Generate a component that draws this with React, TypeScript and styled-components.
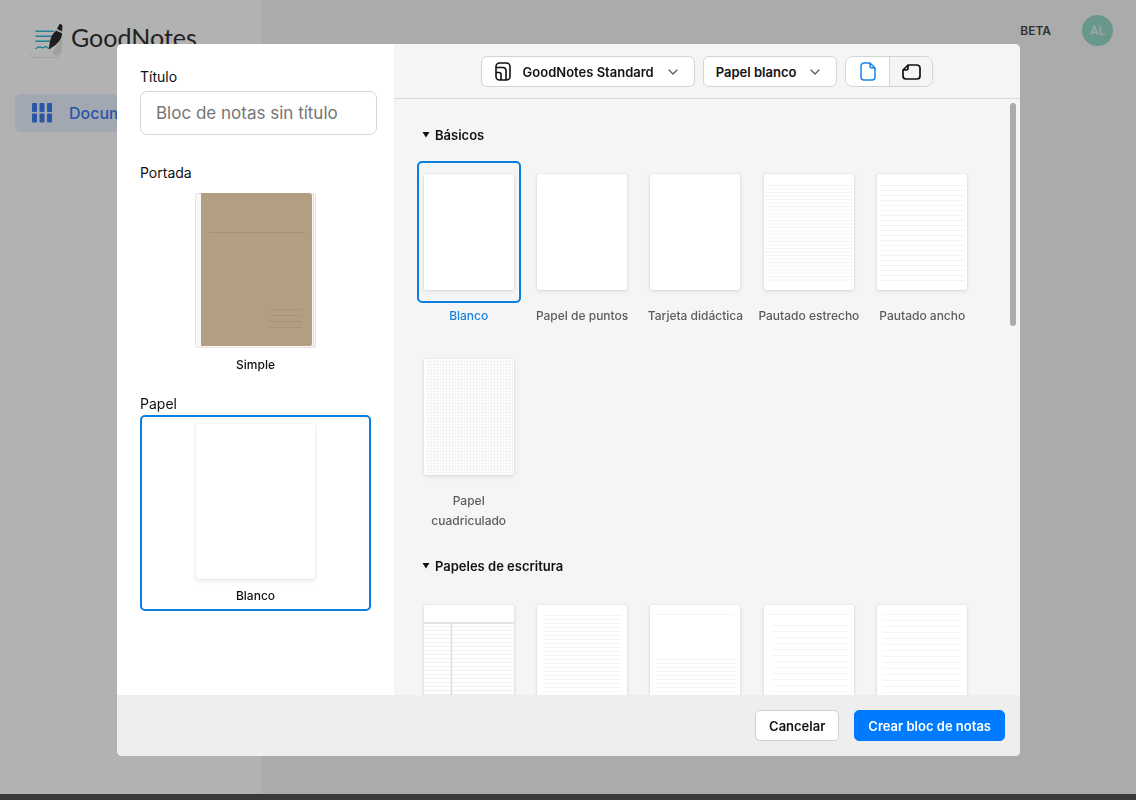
import React from "react";
import styled, { createGlobalStyle } from "styled-components";

const GlobalStyle = createGlobalStyle`
  * { box-sizing: border-box; }
  body {
    margin: 0;
    font-family: Inter, "Liberation Sans", sans-serif;
    font-size: 14px;
    color: #111;
  }
  button, input { font: inherit; color: inherit; }
`;

const Page = styled.div`
  min-height: 100vh;
  display: flex;
  background: #f5f5f5;
  border-bottom: 6px solid #393939;
`;
const Sidebar = styled.aside`
  width: 262px;
  flex: none;
  padding: 20px 15px;
  background: #fff;
`;
const Brand = styled.a`
  display: flex;
  align-items: center;
  gap: 8px;
  height: 38px;
  margin: 0 0 36px 12px;
  font-family: Lato, sans-serif;
  font-size: 25px;
  color: #303030;
  text-decoration: none;
`;
const BrandName = styled.span`
  padding-bottom: 4px;
`;
const NavLink = styled.a`
  display: flex;
  align-items: center;
  gap: 17px;
  height: 38px;
  padding: 0 17px;
  border-radius: 6px;
  background: #e8f1ff;
  color: #3b7bed;
  font-size: 16px;
  font-weight: 500;
  text-decoration: none;
`;
const Main = styled.main`
  flex: 1;
  display: flex;
  justify-content: flex-end;
  align-items: flex-start;
  gap: 31px;
  padding: 15px 23px;
`;
const Beta = styled.span`
  font-size: 12px;
  font-weight: 600;
  line-height: 31px;
  color: #484848;
`;
const Avatar = styled.button`
  width: 31px;
  height: 31px;
  padding: 0;
  border: 0;
  border-radius: 50%;
  background: #95dac8;
  color: #e0efea;
  font-size: 12px;
  font-weight: 600;
`;

const Overlay = styled.div`
  position: fixed;
  inset: 0 0 6px;
  padding: 44px 116px 38px 117px;
  background: rgba(0, 0, 0, 0.3);
`;
const Modal = styled.form`
  display: flex;
  flex-direction: column;
  height: 100%;
  border-radius: 5px;
  overflow: hidden;
  background: #fff;
`;
const Body = styled.div`
  flex: 1;
  min-height: 0;
  display: flex;
`;
const Settings = styled.section`
  width: 277px;
  flex: none;
  padding: 23px 17px 0 23px;
`;
const Label = styled.label`
  display: block;
  line-height: 20px;
`;
const Caption = styled.div`
  line-height: 20px;
`;
const TitleInput = styled.input`
  display: block;
  width: 100%;
  height: 44px;
  margin: 4px 0 28px;
  padding: 0 15px;
  border: 1px solid #d4d4d4;
  border-radius: 7px;
  font-size: 17px;
  &::placeholder { color: #757575; opacity: 1; }
`;
const Choice = styled.button<{ $selected?: boolean }>`
  display: flex;
  flex-direction: column;
  align-items: center;
  width: 231px;
  height: 196px;
  margin: 1px 0 14px;
  padding: 7px 0 0;
  gap: 7px;
  border: 2px solid ${(p) => (p.$selected ? "#0b7fe0" : "transparent")};
  border-radius: 5px;
  background: none;
  font-size: 12px;
  font-weight: 500;
  line-height: 20px;
`;
const Cover = styled.svg`
  display: block;
  width: 121px;
  height: 155px;
`;
const PaperPreview = styled.span`
  width: 119px;
  height: 155px;
  border-radius: 2px;
  background: #fff;
  box-shadow: 0 0 2px rgba(0, 0, 0, 0.16), 0 2px 5px rgba(0, 0, 0, 0.08);
`;

const Library = styled.section`
  position: relative;
  flex: 1;
  min-width: 0;
  display: flex;
  flex-direction: column;
  background: #f5f5f5;
`;
const Toolbar = styled.div`
  display: flex;
  justify-content: center;
  gap: 8px;
  padding: 12px 0 11px;
  border-bottom: 1px solid #d9d9d9;
`;
const Picker = styled.button`
  display: flex;
  align-items: center;
  gap: 11px;
  height: 31px;
  padding: 0 16px 0 12px;
  border: 1px solid #d4d4d4;
  border-radius: 6px;
  background: #fff;
  font-size: 13px;
  font-weight: 600;
  white-space: nowrap;
`;
const ChevronIcon = styled.svg`
  margin-left: 3px;
`;
const Segments = styled.div`
  display: flex;
  height: 31px;
  border: 1px solid #d4d4d4;
  border-radius: 8px;
  overflow: hidden;
`;
const Segment = styled.button<{ $active?: boolean }>`
  display: flex;
  align-items: center;
  justify-content: center;
  width: 43px;
  padding: 0;
  border: 0;
  background: ${(p) => (p.$active ? "#fff" : "#f5f5f5")};
  color: ${(p) => (p.$active ? "#1a86e8" : "#111")};
  & + & { border-left: 1px solid #d4d4d4; }
`;
const Scroller = styled.div`
  flex: 1;
  min-height: 0;
  overflow-y: auto;
  scrollbar-width: none;
  padding: 26px 41px 0 18px;
`;
const ScrollThumb = styled.span`
  position: absolute;
  top: 59px;
  right: 4px;
  width: 6px;
  height: 223px;
  border-radius: 3px;
  background: #ababab;
`;
const Group = styled.details`
  margin-bottom: 25px;
`;
const GroupTitle = styled.summary`
  display: flex;
  align-items: center;
  gap: 5px;
  margin: 0 0 16px 10px;
  font-size: 13px;
  font-weight: 600;
  line-height: 20px;
  list-style: none;
`;
const PaperGrid = styled.div`
  display: grid;
  grid-template-columns: repeat(5, 1fr);
  row-gap: 20px;
`;
const PaperOption = styled.button<{ $selected?: boolean }>`
  display: flex;
  flex-direction: column;
  justify-content: flex-start;
  align-items: center;
  gap: 3px;
  padding: 0 4px;
  border: 0;
  background: none;
  color: ${(p) => (p.$selected ? "#1a80dc" : "#5c5c5c")};
  font-size: 12px;
  font-weight: 500;
  line-height: 20px;
`;
const Frame = styled.span<{ $selected?: boolean }>`
  display: flex;
  align-items: center;
  justify-content: center;
  width: 104px;
  height: 142px;
  border: 2px solid ${(p) => (p.$selected ? "#0b7fe0" : "transparent")};
  border-radius: 5px;
`;
const Sheet = styled.svg`
  width: 90px;
  height: 116px;
  border-radius: 2px;
  background: #fff;
  box-shadow: 0 0 2px rgba(0, 0, 0, 0.14), 0 2px 5px rgba(0, 0, 0, 0.08);
`;
const Footer = styled.footer`
  display: flex;
  justify-content: flex-end;
  gap: 15px;
  padding: 15px;
  background: #eee;
`;
const Action = styled.button<{ $primary?: boolean }>`
  height: 31px;
  padding: 0 13px;
  border: 1px solid ${(p) => (p.$primary ? "#007aff" : "#d0d0d0")};
  border-radius: 5px;
  background: ${(p) => (p.$primary ? "#007aff" : "#fff")};
  color: ${(p) => (p.$primary ? "#fff" : "#111")};
  font-size: 13px;
  font-weight: 600;
`;

type Pattern = "blank" | "narrow" | "wide" | "grid" | "cornell" | "ruled" | "half" | "column" | "margin";
type Paper = { name?: string; pattern: Pattern };

const range = (from: number, to: number, step: number) => {
  const out: number[] = [];
  for (let v = from; v <= to; v += step) out.push(v);
  return out;
};
const rows = (from: number, to: number, step: number, x1: number, x2: number) =>
  range(from, to, step).map((y) => `M${x1} ${y + 0.5}H${x2}`).join("");

const patterns: Record<Pattern, React.ReactNode> = {
  blank: null,
  narrow: <path d={rows(11, 108, 3.5, 1, 89)} stroke="#f4f4f4" />,
  wide: <path d={rows(11, 108, 5, 2, 88)} stroke="#f3f3f3" />,
  grid: (
    <path
      d={rows(2, 114, 3, 1, 89) + range(4, 88, 3).map((x) => `M${x}.5 1V115`).join("")}
      stroke="#f3f3f3"
    />
  ),
  cornell: (
    <>
      <path d={rows(21, 115, 4, 0, 90)} stroke="#efefef" />
      <path d="M0 18H90M27.5 18V116" stroke="#dcdcdc" strokeWidth="1.5" />
    </>
  ),
  ruled: <path d={rows(10, 110, 4, 6, 84)} stroke="#f4f4f4" />,
  half: <path d={"M6 9.5H84" + rows(54, 112, 4, 6, 86)} stroke="#f4f4f4" />,
  column: <path d={"M4 9.5H86" + rows(20, 110, 6, 8, 84)} stroke="#f5f5f5" />,
  margin: <path d={rows(9, 110, 6, 6, 84)} stroke="#f5f5f5" />,
};

const basics: Paper[] = [
  { name: "Blanco", pattern: "blank" },
  { name: "Papel de puntos", pattern: "blank" },
  { name: "Tarjeta didáctica", pattern: "blank" },
  { name: "Pautado estrecho", pattern: "narrow" },
  { name: "Pautado ancho", pattern: "wide" },
  { name: "Papel cuadriculado", pattern: "grid" },
];
const writing: Paper[] = [
  { pattern: "cornell" },
  { pattern: "ruled" },
  { pattern: "half" },
  { pattern: "column" },
  { pattern: "margin" },
];

const Chevron = () => (
  <ChevronIcon width="10" height="6" viewBox="0 0 10 6" fill="none" stroke="#555" strokeWidth="1.2" aria-hidden="true">
    <path d="M1 1l4 4 4-4" strokeLinecap="round" strokeLinejoin="round" />
  </ChevronIcon>
);

function Papers({ title, items, selected }: { title: string; items: Paper[]; selected?: string }) {
  return (
    <Group open>
      <GroupTitle>
        <svg width="8" height="6" viewBox="0 0 8 6" aria-hidden="true"><path d="M.5 0h7L4 5.500z" fill="#111" /></svg>
        {title}
      </GroupTitle>
      <PaperGrid>
        {items.map(({ name, pattern }, i) => {
          const active = selected !== undefined && name === selected;
          return (
            <PaperOption key={i} type="button" $selected={active}>
              <Frame $selected={active}>
                <Sheet viewBox="0 0 90 116" fill="none">{patterns[pattern]}</Sheet>
              </Frame>
              {name}
            </PaperOption>
          );
        })}
      </PaperGrid>
    </Group>
  );
}

const BrandIcon = () => (
  <svg width="36" height="38" viewBox="0 0 36 38" fill="none" aria-hidden="true">
    <rect x="1" y="4" width="34" height="34" rx="8" fill="#eaeaea" />
    <rect x="1" y="1" width="34" height="36" rx="8" fill="#fff" />
    <path d="M25 33l10-15v10q0 6-6 8z" fill="#e6e6e6" />
    <path d="M8.500 11.300h18.500M8.500 16.300h16.500M8.500 21.300h15" stroke="#35b6d6" strokeWidth="1.600" />
    <path d="M9 28.500c2-1 3-2.500 5-1s3.500-2 5.500-.5 2 1.500 3.500 1" stroke="#35b6d6" strokeWidth="1.400" strokeLinecap="round" />
    <path d="M21.800 29.500L22.800 22C24 17 26 13 29 10.500l6 2.700c.2 4.500-3 9-7.200 12.300z" fill="#2c2c2c" />
    <path d="M30 9l2.500-5q2.500-.3 3 2l-.5 5.500z" fill="#2c2c2c" />
  </svg>
);

export default function App() {
  return (
    <>
      <GlobalStyle />
      <Page>
        <Sidebar>
          <Brand href="#"><BrandIcon /><BrandName>GoodNotes</BrandName></Brand>
          <nav>
            <NavLink href="#">
              <svg width="20" height="20" viewBox="0 0 20 20" fill="currentColor" aria-hidden="true">
                {[0, 7.5, 15].map((x) => [0, 10.5].map((y) => (
                  <rect key={`${x}-${y}`} x={x} y={y} width="5" height="9" rx="1" />
                )))}
              </svg>
              Documentos
            </NavLink>
          </nav>
        </Sidebar>
        <Main>
          <Beta>BETA</Beta>
          <Avatar type="button">AL</Avatar>
        </Main>
      </Page>
      <Overlay>
        <Modal role="dialog" onSubmit={(e) => e.preventDefault()}>
          <Body>
            <Settings>
              <Label htmlFor="title">Título</Label>
              <TitleInput id="title" placeholder="Bloc de notas sin título" />
              <Caption>Portada</Caption>
              <Choice type="button">
                <Cover viewBox="0 0 121 155" aria-hidden="true">
                  <rect x="0.500" y="0.500" width="120" height="154" rx="2" fill="#faf8f7" stroke="#e6e4e2" />
                  <path d="M118.500 1V154" stroke="#dedede" />
                  <path d="M6 0H114a3 3 0 0 1 3 3V151a2 2 0 0 1-2 2H6z" fill="#b29f82" />
                  <path d="M14 39.500H110" stroke="#a39277" />
                  <path d="M74 116.500H107M74 122.500H107M74 128.500H107M74 134.500H107" stroke="#a5937a" />
                </Cover>
                Simple
              </Choice>
              <Caption>Papel</Caption>
              <Choice type="button" $selected><PaperPreview />Blanco</Choice>
            </Settings>
            <Library>
              <Toolbar>
                <Picker type="button">
                  <svg width="18" height="19" viewBox="0 0 18 19" fill="none" stroke="#111" strokeWidth="1.600" aria-hidden="true">
                    <rect x="2" y="1" width="14" height="17" rx="3.500" />
                    <path d="M2 5.500h7a3 3 0 0 1 3 3V18M2 10.500h3a2 2 0 0 1 2 2V18" />
                  </svg>
                  GoodNotes Standard
                  <Chevron />
                </Picker>
                <Picker type="button">Papel blanco<Chevron /></Picker>
                <Segments>
                  <Segment type="button" $active aria-label="Vertical">
                    <svg width="16" height="19" viewBox="0 0 16 19" fill="none" stroke="currentColor" strokeWidth="1.500" strokeLinejoin="round">
                      <path d="M10 1H4a3 3 0 0 0-3 3v11a3 3 0 0 0 3 3h8a3 3 0 0 0 3-3V6zM10 1v3a2 2 0 0 0 2 2h3" />
                    </svg>
                  </Segment>
                  <Segment type="button" aria-label="Horizontal">
                    <svg width="19" height="16" viewBox="0 0 19 16" fill="none" stroke="currentColor" strokeWidth="1.700" strokeLinejoin="round">
                      <path d="M1 6v6a3 3 0 0 0 3 3h11a3 3 0 0 0 3-3V4a3 3 0 0 0-3-3H6zM1 6h3a2 2 0 0 0 2-2V1" />
                    </svg>
                  </Segment>
                </Segments>
              </Toolbar>
              <Scroller>
                <Papers title="Básicos" items={basics} selected="Blanco" />
                <Papers title="Papeles de escritura" items={writing} />
              </Scroller>
              <ScrollThumb />
            </Library>
          </Body>
          <Footer>
            <Action type="button">Cancelar</Action>
            <Action type="submit" $primary>Crear bloc de notas</Action>
          </Footer>
        </Modal>
      </Overlay>
    </>
  );
}
